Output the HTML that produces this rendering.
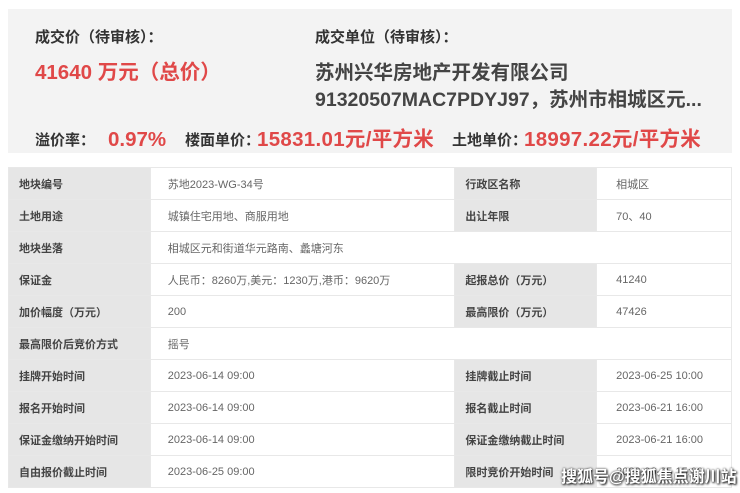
<!DOCTYPE html>
<html><head><meta charset="utf-8"><style>
*{margin:0;padding:0;box-sizing:border-box}
body{width:740px;height:493px;background:#fff;font-family:"Liberation Sans","Noto Sans CJK SC",sans-serif;position:relative;overflow:hidden}
.top{position:absolute;left:8px;top:9px;width:724px;height:144px;background:#f3f3f3}
.t{position:absolute;white-space:nowrap;line-height:26px}
.lab{font-size:15px;color:#333;font-weight:bold}
.red{color:#e04848;font-weight:bold}
.co{font-size:19.5px;color:#444;font-weight:bold}
table{position:absolute;left:8px;top:167px;width:724px;border-collapse:collapse;font-size:11px;color:#666}
td{height:32px;border:1px solid #e8e8e8;padding-left:17px;white-space:nowrap}
td.v4{padding-left:19px}
td.l{background:#e6e6e6;color:#444;font-weight:bold;padding-left:10px}
.wm{position:absolute;left:561px;top:463px;font-size:16px;color:#fff;font-weight:bold;text-shadow:0 0 2px #333,1px 1px 2px #000;white-space:nowrap}
</style></head><body>
<div class="top"></div>
<div class="t lab" style="left:35px;top:25px">成交价（待审核）：</div>
<div class="t lab" style="left:315px;top:25px">成交单位（待审核）：</div>
<div class="t red" style="left:35px;top:60px;font-size:20.5px">41640 万元（总价）</div>
<div class="t co" style="left:315px;top:60px">苏州兴华房地产开发有限公司</div>
<div class="t co" style="left:315px;top:87px">91320507MAC7PDYJ97，苏州市相城区元...</div>
<div class="t lab" style="left:35px;top:128px">溢价率：</div>
<div class="t red" style="left:108px;top:127px;font-size:20.5px">0.97%</div>
<div class="t lab" style="left:185px;top:128px">楼面单价：</div>
<div class="t red" style="left:257px;top:127px;font-size:20.5px;letter-spacing:0.3px">15831.01元/平方米</div>
<div class="t lab" style="left:452px;top:128px">土地单价：</div>
<div class="t red" style="left:524px;top:127px;font-size:20.5px;letter-spacing:0.3px">18997.22元/平方米</div>
<table>
<colgroup><col style="width:142px"><col style="width:305px"><col style="width:142px"><col style="width:135px"></colgroup>
<tr><td class="l">地块编号</td><td>苏地2023-WG-34号</td><td class="l">行政区名称</td><td class="v4">相城区</td></tr>
<tr><td class="l">土地用途</td><td>城镇住宅用地、商服用地</td><td class="l">出让年限</td><td class="v4">70、40</td></tr>
<tr><td class="l">地块坐落</td><td colspan="3">相城区元和街道华元路南、蠡塘河东</td></tr>
<tr><td class="l">保证金</td><td>人民币：8260万,美元：1230万,港币：9620万</td><td class="l">起报总价（万元）</td><td class="v4">41240</td></tr>
<tr><td class="l">加价幅度（万元）</td><td>200</td><td class="l">最高限价（万元）</td><td class="v4">47426</td></tr>
<tr><td class="l">最高限价后竞价方式</td><td colspan="3">摇号</td></tr>
<tr><td class="l">挂牌开始时间</td><td>2023-06-14 09:00</td><td class="l">挂牌截止时间</td><td class="v4">2023-06-25 10:00</td></tr>
<tr><td class="l">报名开始时间</td><td>2023-06-14 09:00</td><td class="l">报名截止时间</td><td class="v4">2023-06-21 16:00</td></tr>
<tr><td class="l">保证金缴纳开始时间</td><td>2023-06-14 09:00</td><td class="l">保证金缴纳截止时间</td><td class="v4">2023-06-21 16:00</td></tr>
<tr><td class="l">自由报价截止时间</td><td>2023-06-25 09:00</td><td class="l">限时竞价开始时间</td><td class="v4">2023-06-25 15:00</td></tr>
</table>
<div class="wm">搜狐号@搜狐焦点谢川站</div>
</body></html>
